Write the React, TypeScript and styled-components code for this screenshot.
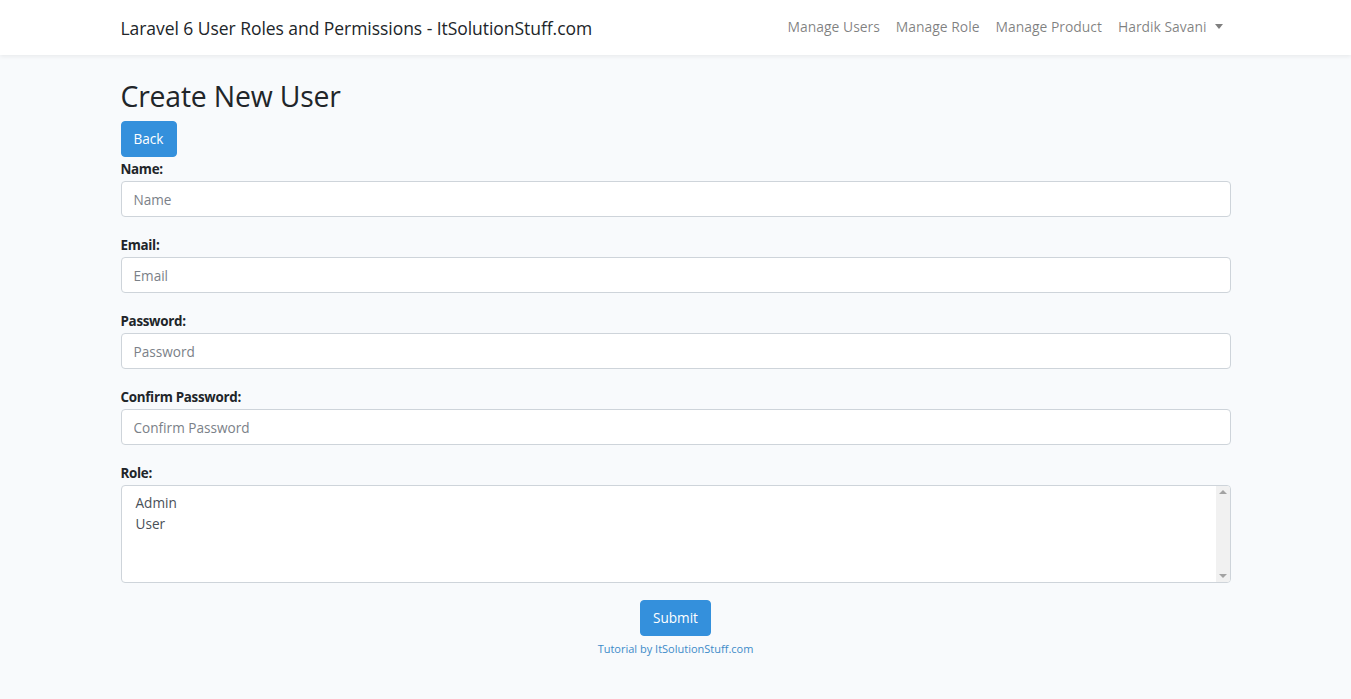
import React from "react";
import styled, { createGlobalStyle } from "styled-components";

const GlobalStyle = createGlobalStyle`
  html, body {
    margin: 0;
    padding: 0;
  }
  body {
    background: #f8fafc;
    font-family: "Open Sans", "Noto Sans", sans-serif;
    font-size: 14.4px;
    line-height: 1.6;
    color: #212529;
  }
  * {
    box-sizing: border-box;
  }
`;

const Navbar = styled.nav`
  height: 55px;
  background: #fff;
  box-shadow: 0 2px 4px rgba(0, 0, 0, 0.06);
  display: flex;
  align-items: center;
`;

const Container = styled.div`
  width: 1140px;
  margin: 0 auto;
  padding: 0 15px;
`;

const NavInner = styled(Container)`
  display: flex;
  align-items: center;
  justify-content: space-between;
`;

const Brand = styled.a`
  font-size: 17.5px;
  color: #212529;
  text-decoration: none;
  letter-spacing: -0.05px;
`;

const NavList = styled.ul`
  display: flex;
  list-style: none;
  margin: 0;
  padding: 0;
`;

const NavLink = styled.a`
  display: flex;
  align-items: center;
  padding: 8px 8px;
  color: rgba(0, 0, 0, 0.5);
  font-size: 13.9px;
  text-decoration: none;
`;

const Caret = styled.span`
  display: inline-block;
  margin-left: 8px;
  border-top: 5px solid rgba(0, 0, 0, 0.5);
  border-left: 4.5px solid transparent;
  border-right: 4.5px solid transparent;
  position: relative;
  top: -1px;
`;

const Main = styled.main`
  padding: 24px 0 24px;
`;

const Title = styled.h2`
  margin: 0 0 8px;
  font-size: 28.4px;
  font-weight: 400;
  line-height: 1.2;
  letter-spacing: -0.2px;
`;

const Button = styled.button`
  display: inline-block;
  height: 36px;
  padding: 0 12px;
  background: #3490dc;
  border: 1px solid #3490dc;
  border-radius: 4px;
  color: #fff;
  font-family: inherit;
  font-size: 13.6px;
  line-height: 1;
`;

const FormGroup = styled.div`
  margin-bottom: 16px;
`;

const Label = styled.label`
  display: block;
  font-weight: 700;
  font-size: 13.4px;
  height: 24px;
  line-height: 24px;
  letter-spacing: -0.3px;
`;

const Input = styled.input`
  display: block;
  width: 100%;
  height: 36px;
  padding: 0 12px;
  background: #fff;
  border: 1px solid #ced4da;
  border-radius: 4px;
  font-family: inherit;
  font-size: 13.6px;
  color: #495057;
  &::placeholder {
    color: #7b8188;
  }
`;

const ListBox = styled.div`
  display: flex;
  height: 98px;
  background: #fff;
  border: 1px solid #ced4da;
  border-radius: 4px;
  overflow: hidden;
`;

const Options = styled.div`
  flex: 1;
  padding: 6px 14px;
`;

const Option = styled.div`
  font-size: 13.6px;
  line-height: 21px;
  color: #495057;
`;

const ScrollTrack = styled.div`
  width: 14px;
  background: #f1f1f1;
  display: flex;
  flex-direction: column;
  justify-content: space-between;
  align-items: center;
  padding: 4px 0;
`;

const Arrow = styled.span<{ $down?: boolean }>`
  width: 0;
  height: 0;
  border-left: 4px solid transparent;
  border-right: 4px solid transparent;
  ${(p) =>
    p.$down
      ? "border-top: 4px solid #a3a3a3;"
      : "border-bottom: 4px solid #a3a3a3;"}
`;

const Center = styled.div`
  display: flex;
  flex-direction: column;
  align-items: center;
  padding-top: 1px;
`;

const Footer = styled.p`
  margin: 4px 0 0;
  font-size: 11px;
  color: #3d8bc9;
  text-align: center;
`;

const fields = [
  { label: "Name:", placeholder: "Name", type: "text" },
  { label: "Email:", placeholder: "Email", type: "text" },
  { label: "Password:", placeholder: "Password", type: "password" },
  { label: "Confirm Password:", placeholder: "Confirm Password", type: "password" },
];

const App: React.FC = () => {
  return (
    <>
      <GlobalStyle />
      <Navbar>
        <NavInner>
          <Brand href="#">Laravel 6 User Roles and Permissions - ItSolutionStuff.com</Brand>
          <NavList>
            <li><NavLink href="#">Manage Users</NavLink></li>
            <li><NavLink href="#">Manage Role</NavLink></li>
            <li><NavLink href="#">Manage Product</NavLink></li>
            <li>
              <NavLink href="#">
                Hardik Savani <Caret />
              </NavLink>
            </li>
          </NavList>
        </NavInner>
      </Navbar>
      <Main>
        <Container>
          <Title>Create New User</Title>
          <Button>Back</Button>
          {fields.map((f) => (
            <FormGroup key={f.label}>
              <Label>{f.label}</Label>
              <Input type={f.type} placeholder={f.placeholder} />
            </FormGroup>
          ))}
          <FormGroup>
            <Label>Role:</Label>
            <ListBox>
              <Options>
                <Option>Admin</Option>
                <Option>User</Option>
              </Options>
              <ScrollTrack>
                <Arrow />
                <Arrow $down />
              </ScrollTrack>
            </ListBox>
          </FormGroup>
          <Center>
            <Button>Submit</Button>
            <Footer>Tutorial by ItSolutionStuff.com</Footer>
          </Center>
        </Container>
      </Main>
    </>
  );
};

export default App;
